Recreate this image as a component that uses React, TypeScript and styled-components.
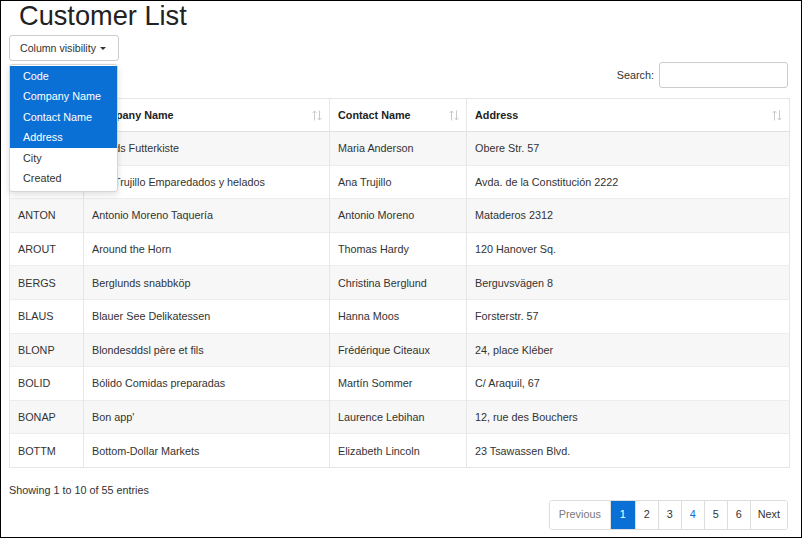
import styled, { createGlobalStyle } from 'styled-components'

const GlobalStyle = createGlobalStyle`
  html, body {
    margin: 0;
    padding: 0;
    background: #fff;
  }
  body {
    font-family: 'Liberation Sans', Arial, sans-serif;
    font-size: 10.8px;
    color: #333;
  }
`

const Frame = styled.div`
  box-sizing: border-box;
  width: 802px;
  height: 538px;
  border: 1px solid #000;
  padding: 0 13px 0 8px;
  position: relative;
`

const Title = styled.h1`
  margin: 0;
  padding-left: 10px;
  font-size: 27.2px;
  font-weight: normal;
  line-height: 30px;
  color: #222;
`

const Toolbar = styled.div`
  position: relative;
  margin-top: 4px;
  height: 26px;
`

const VisButton = styled.button`
  box-sizing: border-box;
  height: 26px;
  width: 110px;
  padding: 0 10px;
  background: #fff;
  border: 1px solid #ccc;
  border-radius: 3px;
  font-family: inherit;
  font-size: 10.6px;
  color: #333;
  display: flex;
  align-items: center;
  gap: 2px;
`

const Caret = styled.span`
  display: inline-block;
  width: 0;
  height: 0;
  border-left: 3px solid transparent;
  border-right: 3px solid transparent;
  border-top: 3px solid #333;
  margin-left: 2px;
`

const Menu = styled.ul`
  position: absolute;
  top: 29px;
  left: 0;
  z-index: 10;
  box-sizing: border-box;
  width: 109px;
  margin: 0;
  padding: 1px 0 3px;
  list-style: none;
  background: #fff;
  border: 1px solid #d4d4d4;
  border-radius: 3px;
  box-shadow: 0 3px 6px rgba(0, 0, 0, 0.12);
`

const MenuItem = styled.li<{ $active?: boolean }>`
  height: 20.4px;
  line-height: 20.4px;
  padding-left: 13px;
  font-size: 10.8px;
  background: ${p => (p.$active ? '#0b70d6' : 'transparent')};
  color: ${p => (p.$active ? '#fff' : '#333')};
`

const SearchRow = styled.div`
  display: flex;
  justify-content: flex-end;
  align-items: center;
  gap: 5px;
  margin-top: 1px;
  height: 26px;
`

const SearchInput = styled.input`
  box-sizing: border-box;
  width: 129px;
  height: 26px;
  border: 1px solid #ccc;
  border-radius: 3px;
`

const Table = styled.table`
  margin-top: 10px;
  width: 780px;
  border-collapse: collapse;
  table-layout: fixed;
  border: 1px solid #e6e6e6;
`

const HeadCell = styled.th`
  position: relative;
  height: 32px;
  padding: 0 8px;
  text-align: left;
  font-weight: bold;
  font-size: 10.8px;
  color: #222;
  border-left: 1px solid #e6e6e6;
  border-bottom: 1px solid #e0e0e0;
`

const SortIcon = styled.svg`
  position: absolute;
  right: 7px;
  top: 11px;
  width: 10px;
  height: 11px;
`

const Row = styled.tr<{ $striped: boolean }>`
  background: ${p => (p.$striped ? '#f7f7f7' : '#fff')};
`

const Cell = styled.td`
  height: 32.6px;
  padding: 0 8px;
  border-left: 1px solid #e6e6e6;
  border-top: 1px solid #ececec;
  white-space: nowrap;
  overflow: hidden;
`

const Footer = styled.div`
  display: flex;
  flex-direction: column;
`

const Info = styled.div`
  margin-top: 16px;
  line-height: 13px;
`

const Pager = styled.div`
  align-self: flex-end;
  display: flex;
  margin-top: 3px;
  border: 1px solid #ddd;
  border-radius: 3px;
  overflow: hidden;
`

const PageBtn = styled.span<{ $active?: boolean; $tone?: string }>`
  box-sizing: border-box;
  height: 28px;
  line-height: 27px;
  padding: 0 ${p => (p.$tone === 'nav' ? '7px' : p.$tone === 'muted' ? '9px' : '0')};
  min-width: 23px;
  text-align: center;
  font-size: 10.8px;
  border-left: 1px solid #ddd;
  &:first-child { border-left: none; }
  background: ${p => (p.$active ? '#0b70d6' : '#fff')};
  color: ${p => (p.$active ? '#fff' : p.$tone === 'muted' ? '#777' : p.$tone === 'link' ? '#0b70d6' : '#333')};
`

const columns = [
  { title: 'Code', width: 74 },
  { title: 'Company Name', width: 246 },
  { title: 'Contact Name', width: 137 },
  { title: 'Address', width: 323 },
]

const customers = [
  ['ALFKI', 'Alfreds Futterkiste', 'Maria Anderson', 'Obere Str. 57'],
  ['ANATR', 'Ana Trujillo Emparedados y helados', 'Ana Trujillo', 'Avda. de la Constitución 2222'],
  ['ANTON', 'Antonio Moreno Taquería', 'Antonio Moreno', 'Mataderos 2312'],
  ['AROUT', 'Around the Horn', 'Thomas Hardy', '120 Hanover Sq.'],
  ['BERGS', 'Berglunds snabbköp', 'Christina Berglund', 'Berguvsvägen 8'],
  ['BLAUS', 'Blauer See Delikatessen', 'Hanna Moos', 'Forsterstr. 57'],
  ['BLONP', 'Blondesddsl père et fils', 'Frédérique Citeaux', '24, place Kléber'],
  ['BOLID', 'Bólido Comidas preparadas', 'Martín Sommer', 'C/ Araquil, 67'],
  ['BONAP', "Bon app'", 'Laurence Lebihan', '12, rue des Bouchers'],
  ['BOTTM', 'Bottom-Dollar Markets', 'Elizabeth Lincoln', '23 Tsawassen Blvd.'],
]

const menuItems = ['Code', 'Company Name', 'Contact Name', 'Address', 'City', 'Created']

function SortArrows() {
  return (
    <SortIcon viewBox="0 0 10 11" fill="none" stroke="#c9c9c9" strokeWidth="1">
      <path d="M2.5 10.5V1M0.5 3L2.5 1L4.5 3" />
      <path d="M7.5 0.5V10M5.5 8L7.5 10L9.5 8" />
    </SortIcon>
  )
}

function App() {
  return (
    <Frame>
      <GlobalStyle />
      <Title>Customer List</Title>
      <Toolbar>
        <VisButton>
          Column visibility <Caret />
        </VisButton>
        <Menu>
          {menuItems.map((m, i) => (
            <MenuItem key={m} $active={i < 4}>
              {m}
            </MenuItem>
          ))}
        </Menu>
      </Toolbar>
      <SearchRow>
        <span>Search:</span>
        <SearchInput />
      </SearchRow>
      <Table>
        <colgroup>
          {columns.map(c => (
            <col key={c.title} style={{ width: c.width }} />
          ))}
        </colgroup>
        <thead>
          <tr>
            {columns.map((c, i) => (
              <HeadCell key={c.title}>
                {c.title}
                {i > 0 && <SortArrows />}
              </HeadCell>
            ))}
          </tr>
        </thead>
        <tbody>
          {customers.map((row, i) => (
            <Row key={row[0]} $striped={i % 2 === 0}>
              {row.map((v, j) => (
                <Cell key={j}>{v}</Cell>
              ))}
            </Row>
          ))}
        </tbody>
      </Table>
      <Footer>
        <Info>Showing 1 to 10 of 55 entries</Info>
        <Pager>
          <PageBtn $tone="muted">Previous</PageBtn>
          <PageBtn $active style={{ width: 25 }}>1</PageBtn>
          <PageBtn>2</PageBtn>
          <PageBtn>3</PageBtn>
          <PageBtn $tone="link">4</PageBtn>
          <PageBtn>5</PageBtn>
          <PageBtn>6</PageBtn>
          <PageBtn $tone="nav">Next</PageBtn>
        </Pager>
      </Footer>
    </Frame>
  )
}

export default App
